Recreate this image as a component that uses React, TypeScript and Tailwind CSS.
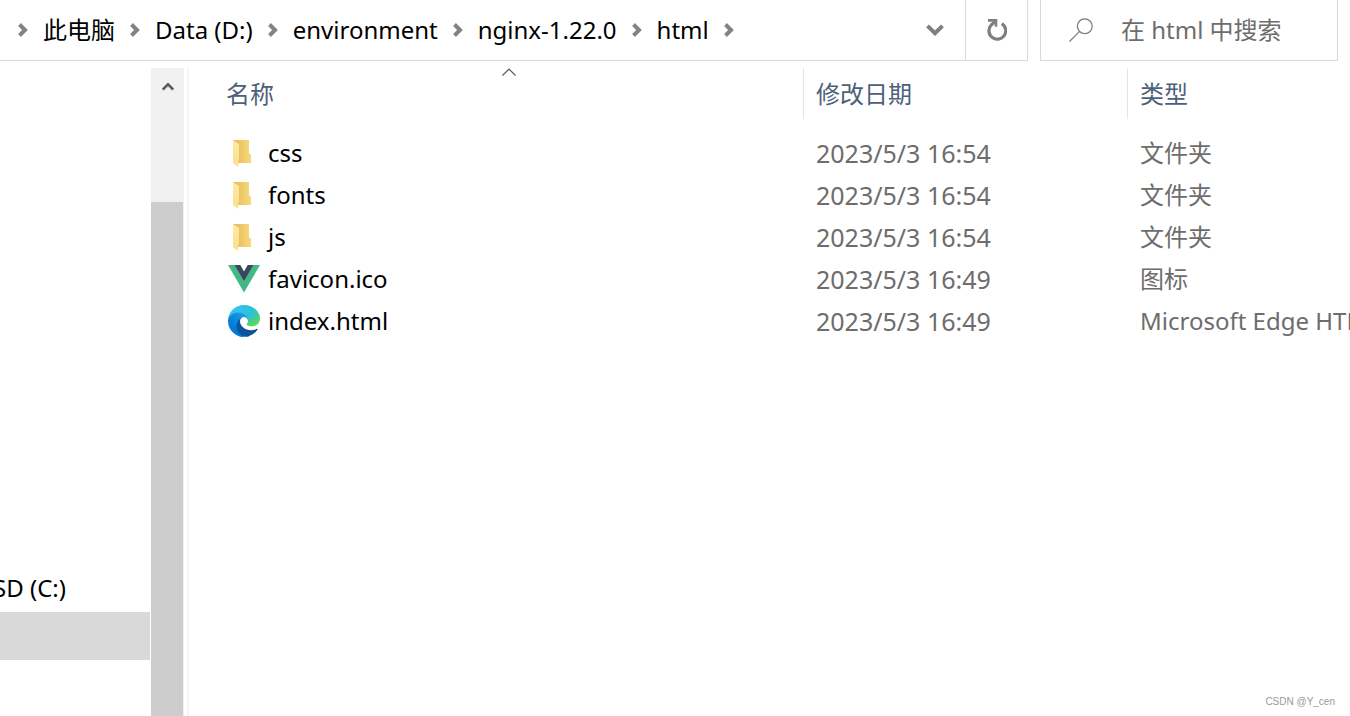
import React from 'react'

type FileKind = 'folder' | 'vue' | 'edge'

type FileItem = {
  name: string
  date: string
  type: string
  kind: FileKind
}

const paths: string[] = ['此电脑', 'Data (D:)', 'environment', 'nginx-1.22.0', 'html']

const files: FileItem[] = [
  { name: 'css', date: '2023/5/3 16:54', type: '文件夹', kind: 'folder' },
  { name: 'fonts', date: '2023/5/3 16:54', type: '文件夹', kind: 'folder' },
  { name: 'js', date: '2023/5/3 16:54', type: '文件夹', kind: 'folder' },
  { name: 'favicon.ico', date: '2023/5/3 16:49', type: '图标', kind: 'vue' },
  { name: 'index.html', date: '2023/5/3 16:49', type: 'Microsoft Edge HTML Document', kind: 'edge' },
]

function Chevron() {
  return (
    <svg width="10" height="14" viewBox="0 0 10 14" className="shrink-0" fill="none" stroke="#838383" strokeWidth="4">
      <path d="M1.5 1.5 7 7 1.5 12.5" />
    </svg>
  )
}

function FolderIcon() {
  return (
    <svg width="32" height="32" viewBox="0 0 32 32" className="shrink-0">
      <defs>
        <linearGradient id="folderBack" x1="0" x2="1" y1="0" y2="0">
          <stop offset="0.2" stopColor="#e6bf60" />
          <stop offset="1" stopColor="#fbdc7c" />
        </linearGradient>
        <linearGradient id="folderFront" x1="0" x2="0" y1="0" y2="1">
          <stop offset="0" stopColor="#ffe9a6" />
          <stop offset="1" stopColor="#fddf8c" />
        </linearGradient>
      </defs>
      <path d="M5 3h16v13l2 2v7l1 1H9z" fill="url(#folderBack)" />
      <path d="M5 3l6 4v16l-1 1v6l-5-4z" fill="url(#folderFront)" />
    </svg>
  )
}

function VueIcon() {
  return (
    <svg width="32" height="28" viewBox="0 0 32 28" className="shrink-0">
      <path d="M0 0h6.4L16 16.5 25.6 0H32L16 27.6z" fill="#42b883" />
      <path d="M6.4 0h5.9L16 6.4 19.7 0h5.9L16 16.5z" fill="#35495e" />
    </svg>
  )
}

function EdgeIcon() {
  return (
    <svg width="32" height="32" viewBox="4.6 5 256 256" className="shrink-0">
      <defs>
        <linearGradient id="edgeDark" x1="63" y1="182" x2="242" y2="182" gradientUnits="userSpaceOnUse">
          <stop offset="0" stopColor="#0c59a4" />
          <stop offset="1" stopColor="#114a8b" />
        </linearGradient>
        <linearGradient id="edgeBlue" x1="150" y1="95" x2="45" y2="215" gradientUnits="userSpaceOnUse">
          <stop offset="0" stopColor="#1b9de2" />
          <stop offset="0.2" stopColor="#1595df" />
          <stop offset="0.7" stopColor="#0680d7" />
          <stop offset="1" stopColor="#0078d4" />
        </linearGradient>
        <radialGradient
          id="edgeGreen"
          cx="0"
          cy="0"
          r="1"
          gradientUnits="userSpaceOnUse"
          gradientTransform="matrix(-8 202.6 -431.5 -17.3 30 50)"
        >
          <stop offset="0" stopColor="#35c1f1" />
          <stop offset="0.15" stopColor="#34c1ed" />
          <stop offset="0.3" stopColor="#2fc2df" />
          <stop offset="0.4" stopColor="#2bc3d2" />
          <stop offset="0.6" stopColor="#52d36b" />
          <stop offset="1" stopColor="#66eb6e" />
        </radialGradient>
      </defs>
      <path
        d="M235.68 195.46a93.73 93.73 0 0 1-10.54 4.71 101.87 101.87 0 0 1-35.9 6.46c-47.32 0-88.54-32.55-88.54-74.32A31.48 31.48 0 0 1 117.13 105c-42.8 1.8-53.8 46.4-53.8 72.53 0 73.88 68.09 81.37 82.76 81.37 7.91 0 19.84-2.3 27-4.56l1.31-.44a128.34 128.34 0 0 0 66.6-52.8 4 4 0 0 0-5.32-5.64Z"
        fill="url(#edgeDark)"
      />
      <path
        d="M110.34 246.34A79.2 79.2 0 0 1 87.6 225a80.72 80.72 0 0 1 29.53-120c3.12-1.47 8.45-4.13 15.54-4a32.35 32.35 0 0 1 25.69 13 31.88 31.88 0 0 1 6.36 18.66c0-.21 24.46-79.6-80-79.6-43.9 0-80 41.66-80 78.21a130.15 130.15 0 0 0 12.11 56 128 128 0 0 0 156.38 67.11 75.55 75.55 0 0 1-62.78-8Z"
        fill="url(#edgeBlue)"
      />
      <path
        d="M156.94 153.78c-.81 1.05-3.3 2.5-3.3 5.66 0 2.61 1.7 5.12 4.72 7.23 14.38 10 41.49 8.68 41.56 8.68a59.56 59.56 0 0 0 30.27-8.35A61.38 61.38 0 0 0 260.62 114c.26-22.41-8-37.31-11.34-43.91C228.09 28.76 182.35 5 132.62 5A128 128 0 0 0 4.62 131.2c.48-36.54 36.8-66.05 80-66.05 3.5 0 23.46.34 42 10.07 16.34 8.58 24.9 18.94 30.85 29.21 6.18 10.67 7.28 24.15 7.28 29.52s-2.74 13.33-7.81 19.83Z"
        fill="url(#edgeGreen)"
      />
    </svg>
  )
}

function FileIcon({ kind }: { kind: FileKind }) {
  if (kind === 'vue') return <VueIcon />
  if (kind === 'edge') return <EdgeIcon />
  return <FolderIcon />
}

function AddressBar() {
  return (
    <header className="flex h-[61px] gap-3 pr-3">
      <div className="flex min-w-0 flex-1 border-r border-b border-[#d9d9d9]">
        <nav className="flex min-w-0 flex-1 items-center gap-[15px] overflow-hidden pl-[18px]">
          <Chevron />
          {paths.map((item) => (
            <React.Fragment key={item}>
              <a href="#" className="whitespace-nowrap text-black">{item}</a>
              <Chevron />
            </React.Fragment>
          ))}
        </nav>
        <button type="button" aria-label="以前的位置" className="flex w-[60px] items-center justify-center">
          <svg width="18" height="12" viewBox="0 0 18 12" fill="none" stroke="#7f7f7f" strokeWidth="4">
            <path d="M1.5 1.8 9 9.2l7.5-7.4" />
          </svg>
        </button>
        <button
          type="button"
          aria-label="刷新"
          className="flex w-[62px] items-center justify-center border-l border-[#d9d9d9]"
        >
          <svg width="20" height="22" viewBox="0 0 20 22" fill="none" stroke="#7f7f7f" strokeWidth="3.2">
            <path d="M14.8 4.6A8.4 8.4 0 1 1 4.2 6L8.4 2.4" />
            <path d="M1 1.4h8v6.4" strokeWidth="2.6" />
          </svg>
        </button>
      </div>
      <label className="flex w-[298px] items-center gap-7 border-x border-b border-[#d9d9d9] pl-7">
        <svg width="24" height="24" viewBox="0 0 24 24" className="shrink-0" fill="none" stroke="#7d7d7d" strokeWidth="1.3">
          <circle cx="15.8" cy="8.2" r="7.4" />
          <path d="M10.6 13.4.5 23.5" />
        </svg>
        <input
          type="text"
          aria-label="搜索"
          placeholder="在 html 中搜索"
          className="w-full min-w-0 bg-transparent outline-none placeholder:text-[#6d6d6d] placeholder:opacity-100"
        />
      </label>
    </header>
  )
}

function Sidebar() {
  return (
    <aside className="flex w-[189px] shrink-0 gap-px border-r-2 border-[#f5f5f5]">
      <div className="flex w-[150px] flex-col justify-end overflow-hidden pb-14">
        <button type="button" className="flex h-12 items-center justify-end pr-[84px] whitespace-nowrap">
          SD (C:)
        </button>
        <button type="button" aria-label="Data (D:)" className="h-12 bg-[#d9d9d9]"></button>
      </div>
      <div className="flex w-[33px] flex-col bg-[#f0f0f0]">
        <button type="button" aria-label="向上滚动" className="flex h-[134px] justify-center pt-[14px]">
          <svg width="12" height="9" viewBox="0 0 12 9" fill="none" stroke="#5a5a5a" strokeWidth="2.6">
            <path d="M.8 7.6 6 2.4l5.2 5.2" />
          </svg>
        </button>
        <div className="w-8 flex-1 bg-[#cdcdcd]"></div>
      </div>
    </aside>
  )
}

function FileList() {
  return (
    <main className="min-w-0 flex-1 overflow-hidden">
      <table className="w-full table-fixed border-collapse text-left whitespace-nowrap">
        <thead>
          <tr className="text-[#4c607a]">
            <th className="p-0 pb-[13px] pl-[25px] font-normal">
              <button type="button" className="relative flex h-[51px] w-full items-center border-r border-[#e5e5e5] pl-3">
                <svg
                  width="14"
                  height="8"
                  viewBox="0 0 14 8"
                  className="absolute top-0 left-1/2 -translate-x-1/2"
                  fill="none"
                  stroke="#5a5a5a"
                  strokeWidth="1.2"
                >
                  <path d="M.5 7.5 7 1l6.5 6.5" />
                </svg>
                名称
              </button>
            </th>
            <th className="w-[324px] p-0 pb-[13px] font-normal">
              <button type="button" className="flex h-[51px] w-full items-center border-r border-[#e5e5e5] pl-3">
                修改日期
              </button>
            </th>
            <th className="w-[222px] p-0 pb-[13px] font-normal">
              <button type="button" className="flex h-[51px] w-full items-center pl-3">类型</button>
            </th>
          </tr>
        </thead>
        <tbody>
          {files.map((file) => (
            <tr key={file.name} className="h-[42px] text-[#6d6d6d]">
              <td className="p-0 pl-[39px]">
                <div className="flex items-center gap-2 text-black">
                  <FileIcon kind={file.kind} />
                  <span>{file.name}</span>
                </div>
              </td>
              <td className="p-0 pl-3 text-[25px]">{file.date}</td>
              <td className="overflow-hidden p-0 pl-3">{file.type}</td>
            </tr>
          ))}
        </tbody>
      </table>
    </main>
  )
}

function App() {
  return (
    <div className="relative flex min-h-screen flex-col overflow-hidden bg-white font-['Noto_Sans','Noto_Sans_CJK_SC',sans-serif] text-[24px] leading-8 text-black">
      <AddressBar />
      <div className="flex flex-1 pt-[7px]">
        <Sidebar />
        <FileList />
      </div>
      <div className="absolute right-[15px] bottom-2 font-['Liberation_Sans',sans-serif] text-[10px] leading-3 text-[#999999]">
        CSDN @Y_cen
      </div>
    </div>
  )
}

export default App
